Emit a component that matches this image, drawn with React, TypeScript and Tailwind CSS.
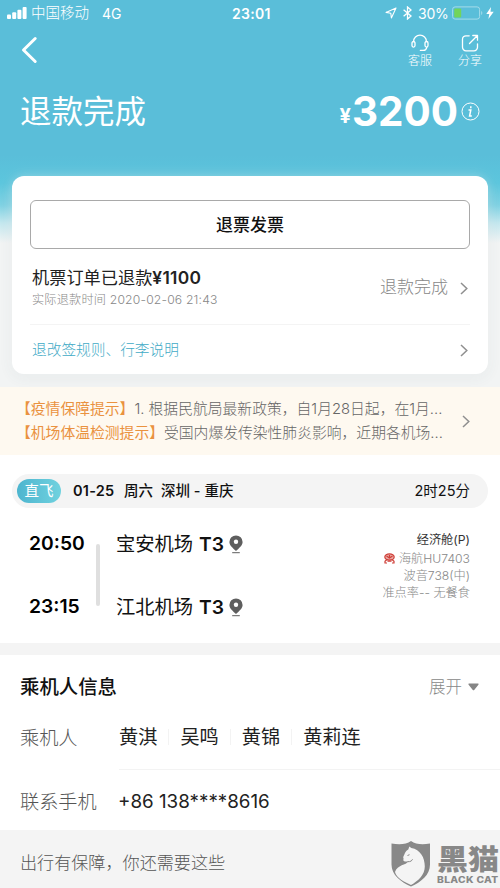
type TipType = {
  label: string,
  text: string
}

type StopType = {
  time: string,
  airport: string
}

const tips: TipType[] = [
  { label: '【疫情保障提示】', text: '1. 根据民航局最新政策，自1月28日起，在1月...' },
  { label: '【机场体温检测提示】', text: '受国内爆发传染性肺炎影响，近期各机场...' },
]

const stops: StopType[] = [
  { time: '20:50', airport: '宝安机场' },
  { time: '23:15', airport: '江北机场' },
]

const passengers = ['黄淇', '吴鸣', '黄锦', '黄莉连']

function Arrow() {
  return (
    <svg className="shrink-0" width="8" height="13" viewBox="0 0 8 13" fill="none" stroke="#8f8f8f" strokeWidth="1.5">
      <path d="M1 1l5.8 5.5L1 12" />
    </svg>
  )
}

function Pin() {
  return (
    <svg className="ml-[5px]" width="14" height="19" viewBox="0 0 14 19">
      <path d="M7 .4a6.600 6.600 0 0 0-6.600 6.600c0 3.600 3.600 6.200 6.600 9 3-2.800 6.600-5.400 6.600-9A6.600 6.600 0 0 0 7 .4z" fill="#5e5e5e" />
      <circle cx="7" cy="6.800" r="2.200" fill="#fff" />
      <path d="M3.200 17.700h7.600" stroke="#5e5e5e" strokeWidth="1" />
    </svg>
  )
}

function StatusBar() {
  return (
    <div className="relative flex h-[26px] items-center justify-between pl-[7px] pr-[6px] text-[13.5px]">
      <div className="flex items-center">
        <svg width="20" height="12" viewBox="0 0 20 12" fill="#fff">
          <rect x="0" y="7.500" width="4" height="4.500" rx="1" />
          <rect x="5.200" y="5.200" width="4" height="6.800" rx="1" />
          <rect x="10.400" y="2.800" width="4" height="9.200" rx="1" />
          <rect x="15.600" y="0" width="4" height="12" rx="1" />
        </svg>
        <span className="ml-1 text-[14.5px] font-light">中国移动</span>
        <span className="ml-[13px] text-[14px]">4G</span>
      </div>
      <span className="absolute left-[232px] text-[14px] font-semibold tracking-[0.3px]">23:01</span>
      <div className="flex items-center">
        <svg width="12" height="12" viewBox="0 0 12 12" fill="none" stroke="#fff" strokeWidth="1.1" strokeLinejoin="round">
          <path d="M11 1L1 5.400l4.800.8L6.400 11z" />
        </svg>
        <svg className="ml-[6px]" width="9" height="14" viewBox="0 0 9 14" fill="none" stroke="#fff" strokeWidth="1.3">
          <path d="M.6 3.800l7.400 6.200L4.500 13V1L8 4 .6 10.200" />
        </svg>
        <span className="ml-[6px] w-[33px] whitespace-nowrap text-[14px] tracking-[-0.2px]">30%</span>
        <svg className="ml-px" width="31" height="14" viewBox="0 0 31 14">
          <rect x=".6" y=".9" width="27" height="12.200" rx="2.500" fill="none" stroke="#a5dcea" strokeWidth="1" />
          <rect x="2.200" y="2.600" width="7" height="8.800" rx="1" fill="#72d45b" />
          <path d="M29.200 5v4c1.500-.6 1.500-3.400 0-4z" fill="#a5dcea" />
        </svg>
        <svg className="ml-[3px]" width="8" height="12" viewBox="0 0 8 12" fill="#fff">
          <path d="M5 0L.3 6.900h3L2.400 12 7.700 4.800H4.500z" />
        </svg>
      </div>
    </div>
  )
}

function NavBar() {
  return (
    <div className="flex h-[48px] items-start justify-between pl-[21px] pr-[18px]">
      <svg className="mt-[10px]" width="17" height="28" viewBox="0 0 17 28" fill="none" stroke="#fff" strokeWidth="3" strokeLinecap="round" strokeLinejoin="round">
        <path d="M14.200 2.500L2.500 14l11.700 11.500" />
      </svg>
      <div className="flex gap-[26px] pt-[8px] text-[12px] leading-[16px] font-light">
        <div className="flex flex-col items-center">
          <svg className="mb-px" width="18" height="18" viewBox="0 0 18 18" fill="none" stroke="#fff" strokeWidth="1.3" strokeLinecap="round">
            <path d="M2.600 7.500C2.600 3.800 5.400 1.200 9 1.200s6.400 2.600 6.400 6.300" />
            <rect x="1" y="7.500" width="3" height="5.600" rx="1.500" />
            <rect x="14" y="7.500" width="3" height="5.600" rx="1.500" />
            <path d="M15.800 13.300c-.4 2-1.800 3.100-3.600 3.100H9.400" />
          </svg>
          <span>客服</span>
        </div>
        <div className="flex flex-col items-center">
          <svg className="mb-px" width="18" height="18" viewBox="0 0 18 18" fill="none" stroke="#fff" strokeWidth="1.3" strokeLinecap="round" strokeLinejoin="round">
            <path d="M8.200 1.800H5a3.500 3.500 0 0 0-3.500 3.500v8A3.500 3.500 0 0 0 5 16.800h8a3.500 3.500 0 0 0 3.500-3.500v-3.500" />
            <path d="M8.500 9.500l7.700-7.700M11.800 1.500h4.700v4.700" />
          </svg>
          <span>分享</span>
        </div>
      </div>
    </div>
  )
}

function RefundCard() {
  return (
    <div className="mx-3 mt-[26px] h-[198px] rounded-xl bg-white px-[18px] pt-6 shadow-[0_0_12px_rgba(255,255,255,0.35),0_3px_14px_rgba(60,90,100,0.08)]">
      <button className="flex h-[49px] w-full items-center justify-center rounded-md border border-[#a9a9a9] pt-[2px] text-[17px] font-medium text-[#111]">
        退票发票
      </button>
      <div className="flex h-[76px] items-center justify-between border-b border-[#f4f4f4] px-[2px]">
        <div className="pt-[3px]">
          <p className="text-[17.2px] leading-[24px] text-[#222]">机票订单已退款<b className="text-[17.4px] font-semibold tracking-[0.3px]">¥1100</b></p>
          <p className="text-[12.2px] leading-[20px] font-light tracking-[0.17px] text-[#888]">实际退款时间 2020-02-06 21:43</p>
        </div>
        <div className="flex items-center gap-3 pt-[3px] text-[17px] font-light text-[#888]">
          退款完成
          <Arrow />
        </div>
      </div>
      <div className="flex h-[50px] items-center justify-between px-[2px] pt-px text-[14.7px] font-light text-[#3faac6]">
        <span>退改签规则、行李说明</span>
        <Arrow />
      </div>
    </div>
  )
}

function Tips() {
  return (
    <div className="flex h-[68px] items-center justify-between bg-[#fef9f0] pl-[16px] pr-[30px]">
      <div className="text-[14.8px] leading-[24px] font-light whitespace-nowrap text-[#666]">
        {tips.map(tip => (
          <p key={tip.label}>
            <span className="font-normal text-[#ea923f]">{tip.label}</span>{tip.text}
          </p>
        ))}
      </div>
      <Arrow />
    </div>
  )
}

function Flight() {
  return (
    <div className="h-[188px] bg-white pt-[19px]">
      <div className="mx-3 flex h-[34px] items-center rounded-full bg-[#f4f4f4] pl-[5px] pr-[18px] text-[14.5px] text-[#111]">
        <span className="flex h-6 w-11 items-center justify-center rounded-full bg-linear-to-r from-[#4db5cf] to-[#70d2df] text-white">直飞</span>
        <span className="ml-[12px] w-[51px] font-semibold tracking-[0.25px]">01-25</span>
        <span className="w-[37px] font-medium">周六</span>
        <span className="font-medium">深圳 - 重庆</span>
        <span className="ml-auto">2时25分</span>
      </div>
      <div className="flex justify-between pt-[21px] pr-[30px] pl-[29px]">
        <div className="flex">
          <div className="flex w-[67px] flex-col gap-[35px] text-[19.3px] leading-[28px] font-semibold text-black">
            {stops.map(stop => <span key={stop.time}>{stop.time}</span>)}
          </div>
          <div className="mt-[15px] h-[62px] w-1 rounded-full bg-[#dfdfdf]" />
          <div className="ml-4 flex flex-col gap-[35px] pt-px text-[19.3px] leading-[28px] text-[#111]">
            {stops.map(stop => (
              <span key={stop.airport} className="flex items-center whitespace-pre">
                {stop.airport}<span className="ml-px font-semibold"> T3</span><Pin />
              </span>
            ))}
          </div>
        </div>
        <div className="flex flex-col items-end pt-px text-[12.2px] leading-[17px] font-light text-[#888]">
          <span className="leading-[20px] font-normal text-[#333]">经济舱(P)</span>
          <span className="flex items-center">
            <svg className="mr-1" width="11" height="11" viewBox="0 0 11 11" fill="none" stroke="#cf3f38" strokeWidth="1.2">
              <ellipse cx="5.500" cy="4" rx="4.700" ry="3.100" fill="#e9aaa5" />
              <path d="M2.500 3l3 2 3-2M5.500 2v3M3 6.500L1 8.300V10h2M8 6.500l2 1.800V10H8M3.500 8.200h4" />
            </svg>
            海航HU7403
          </span>
          <span>波音738(中)</span>
          <span>准点率-- 无餐食</span>
        </div>
      </div>
    </div>
  )
}

function Passengers() {
  return (
    <div className="h-[175px] bg-white pl-5 text-[19.2px]">
      <div className="flex h-[64px] items-center justify-between pr-[21px]">
        <h3 className="pt-[2px] text-[19.4px] font-medium text-[#111]">乘机人信息</h3>
        <div className="flex items-center gap-[6px] text-[16.5px] font-light text-[#888]">
          展开
          <svg width="11" height="8" viewBox="0 0 11 8" fill="#858585">
            <path d="M1.200.5h8.600c.8 0 1 .7.6 1.200L6.200 6.900c-.4.500-1 .5-1.400 0L.6 1.700C.2 1.200.4.500 1.200.5z" />
          </svg>
        </div>
      </div>
      <div className="flex">
        <span className="w-[99px] pt-[5px] font-light text-[#555]">乘机人</span>
        <div className="flex h-[51px] flex-1 items-start border-b border-[#f3f3f3] pt-[4px] text-[#222]">
          {passengers.map((name, i) => (
            <div key={name} className="flex items-center">
              {i > 0 && <i className="mx-[11px] h-4 w-px bg-[#f3f3f3]" />}
              <span>{name}</span>
            </div>
          ))}
        </div>
      </div>
      <div className="flex h-[62px] items-center pt-[3px]">
        <span className="w-[98px] font-light text-[#555]">联系手机</span>
        <span className="text-[18.8px] text-[#222]">+86 138****8616</span>
      </div>
    </div>
  )
}

function BlackCat() {
  return (
    <div className="flex items-start text-[#888]">
      <svg width="42" height="48" viewBox="0 0 42 48">
        <path d="M1.500 3.500Q14 6 21 1q7 5 19 2.500v21C40 35 31 42 21 46.500 11 42 1.500 35 1.500 24.500z" fill="#888" />
        <path d="M18.300 9.500l1-3 2 1.500c9 1.500 13.500 9.500 13.500 18.500C34.800 35 28 41 21 45 14.500 42 6.500 38 5 32c2.500-7.500 11-6.500 13.500-10.700-2.500.5-5 .2-5.200-1 .2-1.500.5-2-.2-3C14.500 15 15 11 18.300 9.500z" fill="#f4f4f4" />
        <path d="M17.500 15.500l2-.8M17.500 21.700c3.200.2 4.400-1 5-2.400" stroke="#888" fill="none" />
      </svg>
      <div className="ml-[5px] flex w-[63px] flex-col whitespace-nowrap">
        <span className="mt-[6px] h-[29px] origin-top scale-y-90 text-[31px] leading-[31px] font-black">黑猫</span>
        <span className="w-[51px] origin-left scale-x-[1.2] text-[8.5px] leading-[11px] font-extrabold tracking-[0.3px]">BLACK CAT</span>
      </div>
    </div>
  )
}

export default function App() {
  return (
    <div className="h-[888px] w-[500px] overflow-hidden bg-[#f4f4f4] font-['Inter','Noto_Sans_CJK_SC',sans-serif]">
      <div className="h-[387px] bg-[linear-gradient(#5abed9_0px,#5abed9_155px,#5cc6dd_183px,#7fd2e3_205px,#c4e8ef_223px,#f2f4f4_243px)]">
        <div className="text-white">
          <StatusBar />
          <NavBar />
          <div className="flex h-[76px] items-center justify-between pr-[20px] pl-5">
            <h1 className="text-[31.5px]">退款完成</h1>
            <div className="flex items-center">
              <span className="mt-[9px] text-[20px] font-bold">¥</span>
              <span className="ml-px text-[40.4px] font-bold">3200</span>
              <svg className="ml-[3px]" width="19" height="19" viewBox="0 0 19 19" fill="none" stroke="#fff">
                <circle cx="9.500" cy="9.500" r="8.500" />
                <path d="M7.500 8h2.300l-1.200 6h2.200M9.800 4.300v1.900" strokeWidth="1.5" />
              </svg>
            </div>
          </div>
        </div>
        <RefundCard />
      </div>
      <Tips />
      <Flight />
      <div className="h-3" />
      <Passengers />
      <div className="flex h-[58px] items-start justify-between pl-5">
        <p className="pt-[21px] text-[17.1px] leading-6 font-light text-[#555]">出行有保障，你还需要这些</p>
        <div className="pt-[10px]">
          <BlackCat />
        </div>
      </div>
    </div>
  )
}
